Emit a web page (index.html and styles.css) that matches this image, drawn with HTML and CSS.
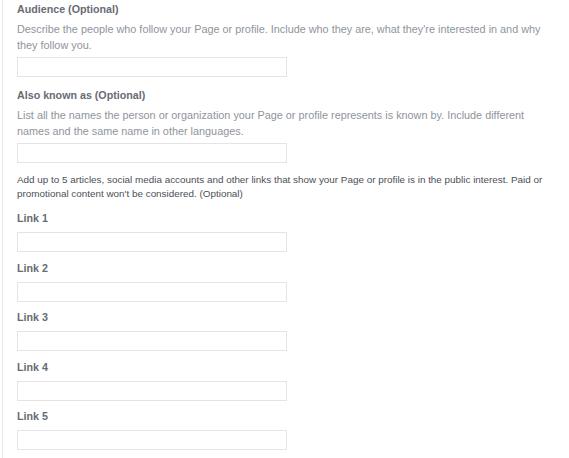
FILE: index.html
```html
<!DOCTYPE html>
<html>
<head>
  <link rel="stylesheet" href="styles.css">
</head>
<body>

<div class="panel">

  <div class="field">
    <div class="label">Audience (Optional)</div>
    <div class="hint">Describe the people who follow your Page or profile. Include who they are, what they're interested in and why they follow you.</div>
    <input type="text" class="box">
  </div>

  <div class="field">
    <div class="label">Also known as (Optional)</div>
    <div class="hint">List all the names the person or organization your Page or profile represents is known by. Include different names and the same name in other languages.</div>
    <input type="text" class="box">
  </div>

  <div class="note">Add up to 5 articles, social media accounts and other links that show your Page or profile is in the public interest. Paid or promotional content won't be considered. (Optional)</div>

  <div class="links">
    <div class="link-field">
      <div class="label">Link 1</div>
      <input type="text" class="box">
    </div>
    <div class="link-field">
      <div class="label">Link 2</div>
      <input type="text" class="box">
    </div>
    <div class="link-field">
      <div class="label">Link 3</div>
      <input type="text" class="box">
    </div>
    <div class="link-field">
      <div class="label">Link 4</div>
      <input type="text" class="box">
    </div>
    <div class="link-field">
      <div class="label">Link 5</div>
      <input type="text" class="box">
    </div>
  </div>

</div>

</body>
</html>
```

FILE: styles.css
```css
body {
  margin: 0;
  background: #fff;
  font-family: "Liberation Sans", Arial, sans-serif;
}
.panel {
  margin-left: 2px;
  width: 533px;
  padding: 1px 0 8px 14px;
  border-left: 1px solid #e4e6e9;
  display: flex;
  flex-direction: column;
}
.field {
  display: flex;
  flex-direction: column;
  margin-bottom: 10px;
}
.label {
  font-size: 10.7px;
  line-height: 16px;
  font-weight: bold;
  color: #676b73;
}
.hint {
  margin-top: 4px;
  font-size: 10.85px;
  line-height: 16px;
  color: #90949c;
}
.box {
  box-sizing: border-box;
  width: 270px;
  height: 20px;
  margin: 4px 0 0 0;
  padding: 0 4px;
  border: 1px solid #e4e4e4;
  border-radius: 0;
  background: #fff;
  outline: none;
}
.note {
  font-size: 9.9px;
  line-height: 14px;
  color: #4b4f56;
  margin-bottom: 9px;
}
.links {
  display: flex;
  flex-direction: column;
  gap: 7.5px;
}
.link-field {
  display: flex;
  flex-direction: column;
}
.link-field .box {
  margin-top: 6px;
}
```
